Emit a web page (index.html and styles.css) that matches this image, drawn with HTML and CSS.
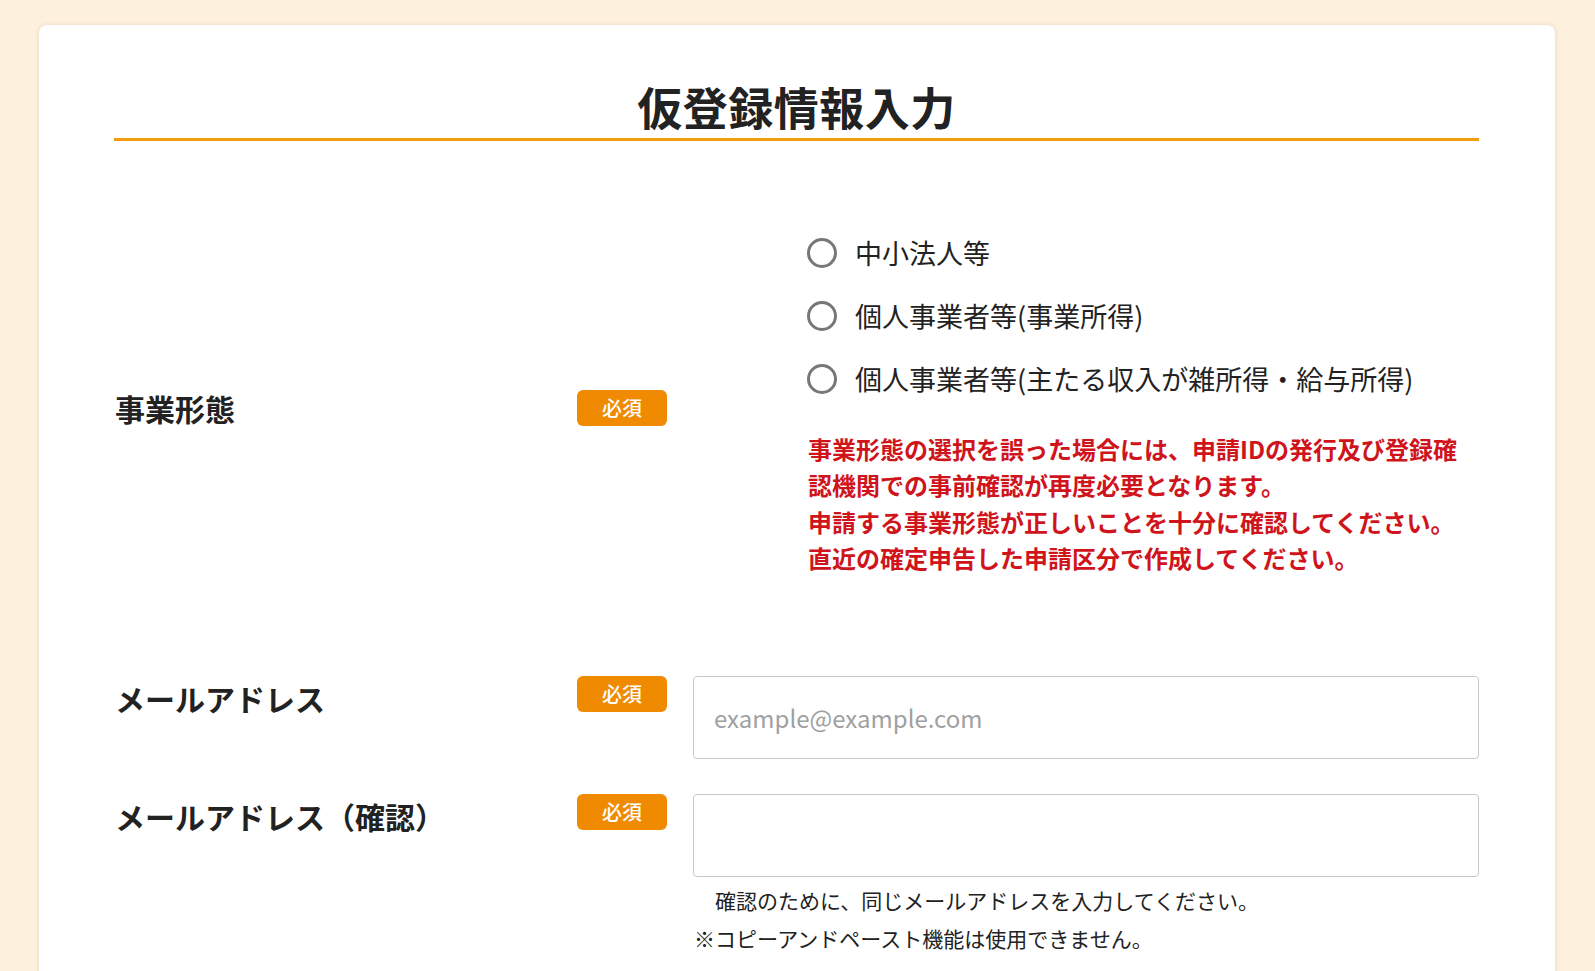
FILE: index.html
```html
<!DOCTYPE html>
<html lang="ja">
<head>
<meta charset="utf-8">
<title>仮登録情報入力</title>
<link rel="stylesheet" href="styles.css">
</head>
<body>
<main class="card">
  <h1 class="title">仮登録情報入力</h1>

  <section class="row row-center row-type">
    <div class="label">事業形態</div>
    <div class="badge">必須</div>
    <div class="field field-radios">
      <label class="radio"><span class="circle"></span><span>中小法人等</span></label>
      <label class="radio"><span class="circle"></span><span>個人事業者等(事業所得)</span></label>
      <label class="radio"><span class="circle"></span><span>個人事業者等(主たる収入が雑所得・給与所得)</span></label>
      <p class="warn">事業形態の選択を誤った場合には、申請IDの発行及び登録確<br>認機関での事前確認が再度必要となります。<br>申請する事業形態が正しいことを十分に確認してください。<br>直近の確定申告した申請区分で作成してください。</p>
    </div>
  </section>

  <section class="row row-email">
    <div class="label">メールアドレス</div>
    <div class="badge">必須</div>
    <div class="field">
      <div class="input placeholder">example@example.com</div>
    </div>
  </section>

  <section class="row row-confirm">
    <div class="label">メールアドレス（確認）</div>
    <div class="badge">必須</div>
    <div class="field">
      <div class="input"></div>
      <p class="note note-first">　確認のために、同じメールアドレスを入力してください。</p>
      <p class="note">※コピーアンドペースト機能は使用できません。</p>
    </div>
  </section>
</main>
</body>
</html>
```

FILE: styles.css
```css
* { box-sizing: border-box; }

html, body {
  margin: 0;
  padding: 0;
}

body {
  background: #fdf0dc;
  font-family: "Noto Sans CJK JP", "Noto Sans", sans-serif;
  color: #222222;
  overflow: hidden;
}

.card {
  margin: 25px 40px 0 39px;
  background: #ffffff;
  border-radius: 8px;
  box-shadow: 0 0 4px rgba(120, 90, 40, 0.18);
  padding: 50px 76px 60px 75px;
  min-height: 1000px;
}

.title {
  margin: 0;
  font-size: 45px;
  font-weight: 700;
  line-height: 63px;
  text-align: center;
  border-bottom: 3px solid #f19d0f;
  letter-spacing: 0.5px;
}

.row {
  display: flex;
  align-items: flex-start;
}

.row-center {
  align-items: center;
}

.row-type {
  margin-top: 80px;
}

.row-email {
  margin-top: 82px;
}

.row-confirm {
  margin-top: 35px;
}

.label {
  width: 463px;
  flex: 0 0 463px;
  font-size: 30px;
  font-weight: 700;
  line-height: 44px;
  padding-left: 1px;
}

.badge {
  flex: 0 0 90px;
  width: 90px;
  height: 36px;
  background: #f08a00;
  color: #ffffff;
  border-radius: 6px;
  font-size: 20px;
  font-weight: 500;
  line-height: 36px;
  text-align: center;
}

.field {
  flex: 1;
  margin-left: 26px;
}

.field-radios {
  padding-left: 114px;
  padding-bottom: 18px;
}

.radio {
  display: flex;
  align-items: center;
  height: 63px;
  font-size: 27px;
  white-space: nowrap;
}

.circle {
  width: 30px;
  height: 30px;
  border: 3px solid #777777;
  border-radius: 50%;
  margin-right: 18px;
  flex: 0 0 30px;
}

.warn {
  margin: 21px 0 0 1px;
  color: #d0141c;
  font-size: 24px;
  font-weight: 700;
  line-height: 36.3px;
  white-space: nowrap;
}

.input {
  height: 83px;
  border: 1px solid #c8c8c8;
  border-radius: 4px;
  padding-left: 20px;
  display: flex;
  align-items: center;
  font-size: 24px;
}

.placeholder {
  color: #a0a0a0;
}

.note {
  margin: 6px 0 0 0;
  font-size: 21px;
  line-height: 32px;
  padding-left: 1px;
}

.note-first {
  margin-top: 7px;
}
```
